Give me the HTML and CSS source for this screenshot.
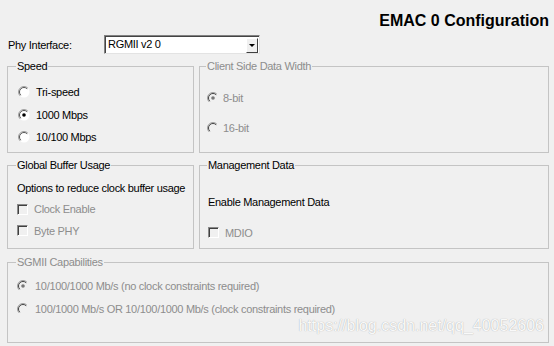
FILE: index.html
```html
<!DOCTYPE html>
<html lang="en">
<head>
    <meta charset="UTF-8">
    <meta name="viewport" content="width=device-width, initial-scale=1.0">
    <title>EMAC 0 Configuration</title>
    <link rel="stylesheet" href="styles.css">
</head>

<body>
    <div class="page">
        <div class="title">EMAC 0 Configuration</div>

        <!-- 接口选择 -->
        <div class="phy">
            <div class="phy-label">Phy Interface:</div>
            <div class="combo">
                <div class="combo-text">RGMII v2 0</div>
                <div class="combo-btn"><span class="tri"></span></div>
            </div>
        </div>

        <div class="groups">
            <fieldset class="group speed">
                <legend>Speed</legend>
                <div class="row">
                    <svg class="radio" viewBox="0 0 12 12"><circle cx="6" cy="6" r="5.5" fill="#fff"/><path d="M2.1 9.9 A5.5 5.5 0 0 1 9.9 2.1" stroke="#a0a0a0" fill="none"/><path d="M2.8 9.2 A4.5 4.5 0 0 1 9.2 2.8" stroke="#555" fill="none"/></svg>
                    <span>Tri-speed</span>
                </div>
                <div class="row">
                    <svg class="radio" viewBox="0 0 12 12"><circle cx="6" cy="6" r="5.5" fill="#fff"/><path d="M2.1 9.9 A5.5 5.5 0 0 1 9.9 2.1" stroke="#a0a0a0" fill="none"/><path d="M2.8 9.2 A4.5 4.5 0 0 1 9.2 2.8" stroke="#555" fill="none"/><circle cx="6" cy="6" r="1.8" fill="#000"/></svg>
                    <span>1000 Mbps</span>
                </div>
                <div class="row">
                    <svg class="radio" viewBox="0 0 12 12"><circle cx="6" cy="6" r="5.5" fill="#fff"/><path d="M2.1 9.9 A5.5 5.5 0 0 1 9.9 2.1" stroke="#a0a0a0" fill="none"/><path d="M2.8 9.2 A4.5 4.5 0 0 1 9.2 2.8" stroke="#555" fill="none"/></svg>
                    <span>10/100 Mbps</span>
                </div>
            </fieldset>

            <fieldset class="group client off">
                <legend>Client Side Data Width</legend>
                <div class="row">
                    <svg class="radio" viewBox="0 0 12 12"><circle cx="6" cy="6" r="5.5" fill="#f0f0f0"/><path d="M2.1 9.9 A5.5 5.5 0 0 1 9.9 2.1" stroke="#a0a0a0" fill="none"/><path d="M2.8 9.2 A4.5 4.5 0 0 1 9.2 2.8" stroke="#444" fill="none"/><circle cx="6" cy="6" r="1.8" fill="#777"/></svg>
                    <span>8-bit</span>
                </div>
                <div class="row">
                    <svg class="radio" viewBox="0 0 12 12"><circle cx="6" cy="6" r="5.5" fill="#f0f0f0"/><path d="M2.1 9.9 A5.5 5.5 0 0 1 9.9 2.1" stroke="#a0a0a0" fill="none"/><path d="M2.8 9.2 A4.5 4.5 0 0 1 9.2 2.8" stroke="#444" fill="none"/></svg>
                    <span>16-bit</span>
                </div>
            </fieldset>

            <fieldset class="group buffer">
                <legend>Global Buffer Usage</legend>
                <div class="row">Options to reduce clock buffer usage</div>
                <div class="row off"><span class="check"></span><span>Clock Enable</span></div>
                <div class="row off"><span class="check"></span><span>Byte PHY</span></div>
            </fieldset>

            <fieldset class="group mgmt">
                <legend>Management Data</legend>
                <div class="row">Enable Management Data</div>
                <div class="row off"><span class="check"></span><span>MDIO</span></div>
            </fieldset>

            <fieldset class="group sgmii off">
                <legend>SGMII Capabilities</legend>
                <div class="row">
                    <svg class="radio" viewBox="0 0 12 12"><circle cx="6" cy="6" r="5.5" fill="#f0f0f0"/><path d="M2.1 9.9 A5.5 5.5 0 0 1 9.9 2.1" stroke="#a0a0a0" fill="none"/><path d="M2.8 9.2 A4.5 4.5 0 0 1 9.2 2.8" stroke="#444" fill="none"/><circle cx="6" cy="6" r="1.8" fill="#777"/></svg>
                    <span>10/100/1000 Mb/s (no clock constraints required)</span>
                </div>
                <div class="row">
                    <svg class="radio" viewBox="0 0 12 12"><circle cx="6" cy="6" r="5.5" fill="#f0f0f0"/><path d="M2.1 9.9 A5.5 5.5 0 0 1 9.9 2.1" stroke="#a0a0a0" fill="none"/><path d="M2.8 9.2 A4.5 4.5 0 0 1 9.2 2.8" stroke="#444" fill="none"/></svg>
                    <span>100/1000 Mb/s OR 10/100/1000 Mb/s (clock constraints required)</span>
                </div>
                <div class="mark">https://blog.csdn.net/qq_40052606</div>
            </fieldset>
        </div>
    </div>
</body>
</html>
```

FILE: styles.css
```css
/* 整体 */
body {
    margin: 0;
    background-color: #f0f0f0;
    font-family: "Liberation Sans", Arial, sans-serif;
    font-size: 11px;
    letter-spacing: -0.3px;
    color: #000;
}

.page {
    padding: 11px 5px 0 7px;
}

.title {
    text-align: right;
    font-size: 16px;
    font-weight: bold;
    letter-spacing: 0;
    line-height: 20px;
}

/* 接口选择 */
.phy {
    display: flex;
    align-items: center;
    margin-top: 4px;
    height: 19px;
}

.phy-label {
    width: 96px;
    padding-left: 1px;
}

.combo {
    display: flex;
    width: 151px;
    height: 15px;
    background-color: #fff;
    border-top: 1px solid #828282;
    border-left: 1px solid #828282;
    border-right: 1px solid #e3e3e3;
    border-bottom: 1px solid #e3e3e3;
    box-shadow: inset 1px 1px 0 #444;
    padding: 1px 1px 1px 2px;
}

.combo-text {
    flex: 1;
    line-height: 15px;
    padding-left: 1px;
}

.combo-btn {
    width: 10px;
    height: 13px;
    margin-top: 1px;
    background-color: #f0f0f0;
    border-top: 1px solid #fff;
    border-left: 1px solid #fff;
    border-right: 1px solid #404040;
    border-bottom: 1px solid #404040;
    display: flex;
    align-items: center;
    justify-content: center;
}

.tri {
    width: 0;
    height: 0;
    border-left: 3px solid transparent;
    border-right: 3px solid transparent;
    border-top: 3px solid #000;
}

/* 分组框 */
.groups {
    display: grid;
    grid-template-columns: 187px 350px;
    grid-template-rows: 94px 91px;
    column-gap: 5px;
    row-gap: 5px;
    margin-top: 5px;
}

.group {
    margin: 0;
    min-width: 0;
    border: 1px solid #c4c4c4;
    padding: 0 0 0 9px;
    display: flex;
    flex-direction: column;
    position: relative;
}

.group legend {
    margin-left: -1px;
    padding: 0 1px;
    line-height: 14px;
}

.row {
    display: flex;
    align-items: center;
    white-space: nowrap;
}

.radio {
    width: 12px;
    height: 12px;
    margin-right: 6px;
}

.check {
    width: 9px;
    height: 9px;
    margin-right: 6px;
    background-color: #f0f0f0;
    border-top: 1px solid #8a8a8a;
    border-left: 1px solid #8a8a8a;
    border-right: 1px solid #fff;
    border-bottom: 1px solid #fff;
    box-shadow: inset 1px 1px 0 #404040;
}

.off,
.off legend {
    color: #8d8d8d;
}

.speed {
    padding-top: 8px;
}
.speed .row {
    height: 22.5px;
}
.speed .radio {
    margin-left: 1px;
}

.client {
    padding-top: 10px;
    padding-left: 7px;
}
.client .row {
    height: 30px;
}
.client .radio {
    margin-right: 4px;
}

.buffer {
    padding-top: 5px;
}
.buffer .row {
    height: 21.5px;
}

.mgmt {
    padding-top: 15px;
    padding-left: 8px;
}
.mgmt .row {
    height: 33px;
}

.sgmii {
    grid-column: 1 / 3;
    height: 88px;
    margin-top: 1px;
    padding-top: 5px;
    box-sizing: border-box;
}
.sgmii .row {
    height: 23.5px;
}

/* 水印 */
.mark {
    position: absolute;
    right: 4px;
    bottom: 7px;
    font-size: 16px;
    letter-spacing: 0;
    color: rgba(255, 255, 255, 0.95);
    text-shadow: 0 0 1px rgba(0, 0, 0, 0.35);
}
```
